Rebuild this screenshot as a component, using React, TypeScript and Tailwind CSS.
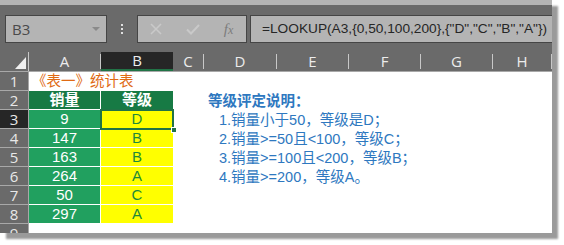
import React from "react";

const COLS = [
  { k: "A", w: 72 },
  { k: "B", w: 72 },
  { k: "C", w: 31 },
  { k: "D", w: 73 },
  { k: "E", w: 72 },
  { k: "F", w: 72 },
  { k: "G", w: 72 },
  { k: "H", w: 59 },
];

const DATA: [string, string][] = [
  ["9", "D"],
  ["147", "B"],
  ["163", "B"],
  ["264", "A"],
  ["50", "C"],
  ["297", "A"],
];

const NOTES = [
  "1.销量小于50，等级是D；",
  "2.销量>=50且<100，等级C；",
  "3.销量>=100且<200，等级B；",
  "4.销量>=200，等级A。",
];

const cellFont = {
  fontFamily: '"Liberation Sans", "Noto Sans CJK SC", sans-serif',
};
const uiFont = { fontFamily: '"Open Sans", "Noto Sans", sans-serif' };

function RowHeader({ n, sel, h = 19 }: { n: number; sel?: boolean; h?: number }) {
  return (
    <div
      className={`w-[29px] shrink-0 border-b border-r border-[#a8a8a8] flex items-center justify-center text-[15px] text-[#e8e8e8] overflow-hidden ${
        sel ? "bg-[#262626]" : "bg-[#6a6a6a]"
      }`}
      style={{ ...uiFont, height: h }}
    >
      {n}
    </div>
  );
}

function Note({ children, bold }: { children: React.ReactNode; bold?: boolean }) {
  return (
    <div
      className={`absolute top-[1px] whitespace-nowrap text-[14.5px] leading-[19px] text-[#2e78c0] ${
        bold ? "font-bold left-[4px]" : "left-[15px]"
      }`}
      style={{ fontFamily: '"Liberation Sans", "Noto Sans CJK SC", sans-serif' }}
    >
      {children}
    </div>
  );
}

export default function App() {
  return (
    <div className="w-[564px] h-[245px] bg-white">
      <div className="w-[552px] h-[233px] bg-white shadow-[6px_6px_2px_#9a9a9a] flex flex-col overflow-hidden">
        {/* top strip */}
        <div className="h-[5px] shrink-0 bg-[#b4b4b4]" />
        {/* formula bar */}
        <div className="h-[47px] shrink-0 bg-[#6a6a6a] flex items-start pt-[10px] pl-[5px]">
          <div className="w-[102px] h-[28px] border border-[#454545] bg-[#b4b4b4] flex items-center justify-between pl-[6px] pr-[6px]">
            <span className="text-[15px] text-[#4a4a4a]" style={uiFont}>
              B3
            </span>
            <svg width="8" height="5" viewBox="0 0 8 5">
              <path d="M0 0H8L4 4Z" fill="#8a8a8a" />
            </svg>
          </div>
          <div className="w-[30px] h-[28px] flex flex-col items-center justify-center gap-[2px]">
            <div className="w-[2px] h-[2px] bg-[#e0e0e0]" />
            <div className="w-[2px] h-[2px] bg-[#e0e0e0]" />
            <div className="w-[2px] h-[2px] bg-[#e0e0e0]" />
          </div>
          <div className="w-[110px] h-[28px] border border-[#454545] bg-[#b4b4b4] flex items-center">
            <div className="w-[36px] flex justify-center">
              <svg width="12" height="12" viewBox="0 0 12 12">
                <path d="M1 1L11 11M11 1L1 11" stroke="#c9c9c9" strokeWidth="1.6" />
              </svg>
            </div>
            <div className="w-[37px] flex justify-center">
              <svg width="14" height="11" viewBox="0 0 14 11">
                <path d="M1 5.5L5 9.5L13 1" stroke="#c9c9c9" strokeWidth="2" fill="none" />
              </svg>
            </div>
            <div
              className="w-[35px] flex justify-center italic text-[15px] text-[#7c7c7c]"
              style={{ fontFamily: '"Liberation Serif", serif' }}
            >
              <span>
                f<span className="text-[12px]">x</span>
              </span>
            </div>
          </div>
          <div className="ml-[3px] flex-1 h-[28px] border border-r-0 border-[#454545] bg-[#b4b4b4] flex items-center pl-[11px]">
            <span className="text-[13.7px] text-[#262626] whitespace-nowrap" style={cellFont}>
              {'=LOOKUP(A3,{0,50,100,200},{"D","C","B","A"})'}
            </span>
          </div>
        </div>
        {/* column headers */}
        <div className="h-[20px] shrink-0 flex bg-[#6a6a6a] border-b border-[#a8a8a8]">
          <div className="w-[29px] shrink-0 relative border-r border-[#c8c8c8]">
            <svg className="absolute left-[15px] top-[5px]" width="11" height="12" viewBox="0 0 11 12">
              <path d="M11 0V12H0Z" fill="#f0f0f0" />
            </svg>
          </div>
          {COLS.map((c) => (
            <div
              key={c.k}
              className={`shrink-0 flex items-center justify-center text-[15px] text-[#ececec] ${
                c.k === "B"
                  ? "bg-[#262626] border-b-2 border-[#217346]"
                  : "border-r border-[#c8c8c8] my-[2px]"
              }`}
              style={{ ...uiFont, width: c.w }}
            >
              {c.k}
            </div>
          ))}
        </div>
        {/* rows */}
        <div className="flex-1 min-h-0 overflow-hidden flex flex-col relative">
          {/* row 1 */}
          <div className="flex h-[19px] shrink-0">
            <RowHeader n={1} />
            <div
              className="pl-[3px] whitespace-nowrap text-[14.5px] leading-[19px] text-[#e06a14]"
              style={cellFont}
            >
              《表一》统计表
            </div>
          </div>
          {/* row 2 */}
          <div className="flex h-[19px] shrink-0">
            <RowHeader n={2} />
            <div
              className="w-[72px] h-[19px] bg-[#177a44] border-r border-b border-white flex items-center justify-center text-white font-bold text-[15px]"
              style={cellFont}
            >
              销量
            </div>
            <div
              className="w-[72px] h-[19px] bg-[#177a44] border-b border-white flex items-center justify-center text-white font-bold text-[15px]"
              style={cellFont}
            >
              等级
            </div>
            <div className="w-[31px]" />
            <div className="relative w-[73px]">
              <Note bold>等级评定说明：</Note>
            </div>
          </div>
          {DATA.map(([a, b], i) => (
            <div key={i} className="flex h-[19px] shrink-0">
              <RowHeader n={i + 3} sel={i === 0} />
              <div
                className="w-[72px] h-[19px] bg-[#21a05f] border-r border-b border-white flex items-center justify-center text-white text-[15px]"
                style={cellFont}
              >
                {a}
              </div>
              <div
                className="w-[72px] h-[19px] bg-[#ffff00] border-b border-white flex items-center justify-center text-[#1f8a3a] text-[15px]"
                style={cellFont}
              >
                {b}
              </div>
              <div className="w-[31px]" />
              <div className="relative w-[73px]">{i < 4 && <Note>{NOTES[i]}</Note>}</div>
            </div>
          ))}
          <div className="flex h-[19px] shrink-0">
            <RowHeader n={9} />
          </div>
          {/* selection B3 */}
          <div className="absolute left-[100px] top-[37px] w-[74px] h-[21px] border-2 border-[#217346]" />
          <div className="absolute left-[171px] top-[55px] w-[6px] h-[6px] bg-[#217346] border border-white" />
        </div>
      </div>
    </div>
  );
}
